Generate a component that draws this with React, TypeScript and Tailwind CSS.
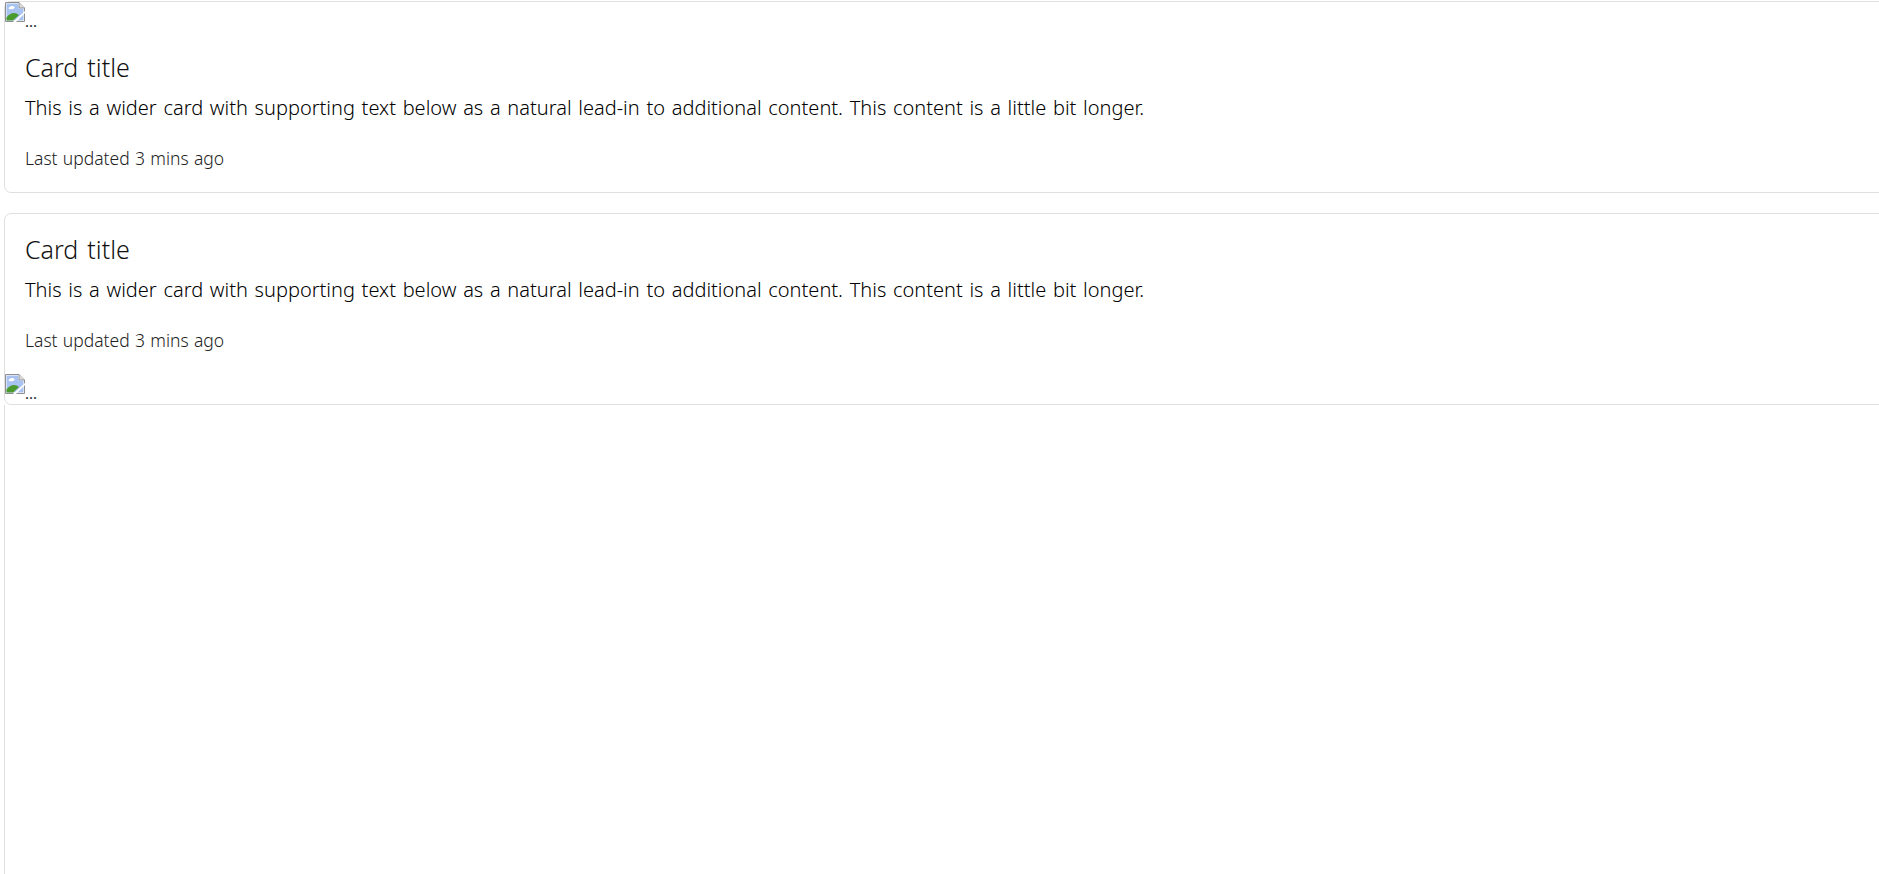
import React from 'react';

const BrokenImage: React.FC = () => (
  <div className="h-[30px] flex items-start text-[15px] leading-[38px]">
    <svg className="w-5 h-5 shrink-0" viewBox="0 0 20 20">
      <path d="M0.5 0.5H14L19.5 6V19.5H0.5Z" fill="#ffffff" stroke="#8f8f8f" />
      <path d="M14 0.5V6H19.5" fill="#dcdcdc" stroke="#8f8f8f" />
      <path d="M1.5 1.5H13.5V6.5H18.5V18.5H1.5Z" fill="#a9c3f0" />
      <path d="M3.5 6.5C4.5 3.5 8 3 10 5.5C8.5 7.5 5 8 3.5 6.5Z" fill="#ffffff" />
      <path d="M1.5 18.5V15.5C5 10.5 10 9.5 14 13L8 18.5Z" fill="#4a9a2e" />
      <path d="M8 20L20 9V11L11 20Z" fill="#ffffff" />
    </svg>
    <span className="text-[#212529]">...</span>
  </div>
);

const CardBody: React.FC = () => (
  <div className="p-5">
    <h5 className="text-[25px] leading-[30px] mb-[10px] font-light text-[#111] [word-spacing:2.5px]">Card title</h5>
    <p className="text-[20px] leading-[30px] pt-px mb-[19px] font-light text-black [word-spacing:1.5px]">
      This is a wider card with supporting text below as a natural lead-in to additional content. This content is a little bit longer.
    </p>
    <p className="text-[17.5px] leading-[30px] pt-px -mb-px font-light text-[#222] [word-spacing:0.75px]">Last updated 3 mins ago</p>
  </div>
);

export default function App() {
  return (
    <div className="h-[874px] overflow-hidden bg-white pt-px pl-1 font-['Noto_Sans','Open_Sans',sans-serif]">
      <div className="w-[2000px]">
        <div className="border border-[#dfdfdf] rounded-[7px] mb-5">
          <BrokenImage />
          <CardBody />
        </div>
        <div className="border border-[#dfdfdf] rounded-[7px]">
          <CardBody />
          <BrokenImage />
        </div>
        <div className="border-l border-[#dfdfdf] h-[600px]" />
      </div>
    </div>
  );
}
